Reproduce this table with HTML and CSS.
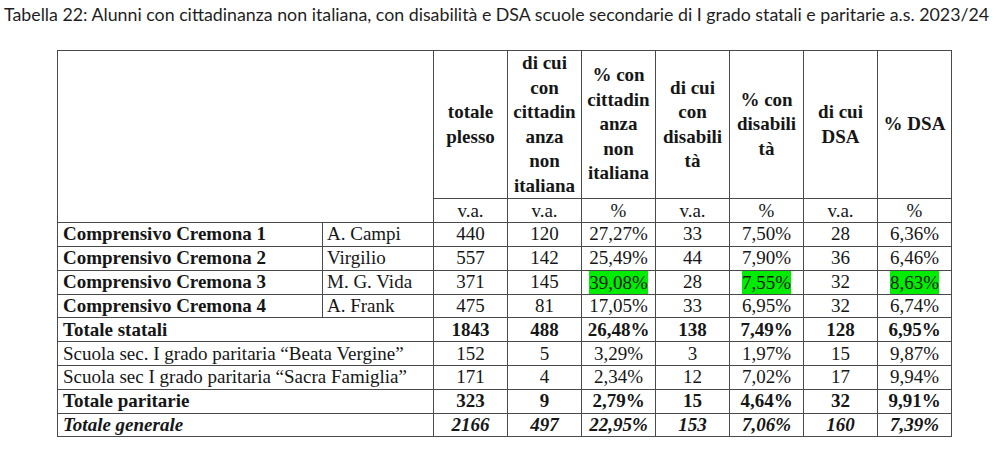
FILE: index.html
```html
<!DOCTYPE html>
<html lang="it">
<head>
<meta charset="utf-8">
<title>Tabella 22</title>
<link rel="stylesheet" href="styles.css">
</head>
<body>
<div class="title">Tabella 22: Alunni con cittadinanza non italiana, con disabilità e DSA scuole secondarie di I grado statali e paritarie a.s. 2023/24</div>
<table class="tab">
  <colgroup>
    <col class="c-name"><col class="c-plesso">
    <col class="c-n"><col class="c-n"><col class="c-n"><col class="c-n"><col class="c-n"><col class="c-n"><col class="c-n">
  </colgroup>
  <tr class="head">
    <th colspan="2" rowspan="2"></th>
    <th>totale<br>plesso</th>
    <th>di cui<br>con<br>cittadin<br>anza<br>non<br>italiana</th>
    <th>% con<br>cittadin<br>anza<br>non<br>italiana</th>
    <th>di cui<br>con<br>disabili<br>tà</th>
    <th>% con<br>disabili<br>tà</th>
    <th>di cui<br>DSA</th>
    <th>% DSA</th>
  </tr>
  <tr class="unit">
    <td>v.a.</td><td>v.a.</td><td>%</td><td>v.a.</td><td>%</td><td>v.a.</td><td>%</td>
  </tr>
  <tr class="r">
    <td class="nm b">Comprensivo Cremona 1</td><td class="pl">A. Campi</td>
    <td>440</td><td>120</td><td>27,27%</td><td>33</td><td>7,50%</td><td>28</td><td>6,36%</td>
  </tr>
  <tr class="r">
    <td class="nm b">Comprensivo Cremona 2</td><td class="pl">Virgilio</td>
    <td>557</td><td>142</td><td>25,49%</td><td>44</td><td>7,90%</td><td>36</td><td>6,46%</td>
  </tr>
  <tr class="r">
    <td class="nm b">Comprensivo Cremona 3</td><td class="pl">M. G. Vida</td>
    <td>371</td><td>145</td><td><span class="hl">39,08%</span></td><td>28</td><td><span class="hl">7,55%</span></td><td>32</td><td><span class="hl">8,63%</span></td>
  </tr>
  <tr class="r">
    <td class="nm b">Comprensivo Cremona 4</td><td class="pl">A. Frank</td>
    <td>475</td><td>81</td><td>17,05%</td><td>33</td><td>6,95%</td><td>32</td><td>6,74%</td>
  </tr>
  <tr class="r b">
    <td class="nm" colspan="2">Totale statali</td>
    <td>1843</td><td>488</td><td>26,48%</td><td>138</td><td>7,49%</td><td>128</td><td>6,95%</td>
  </tr>
  <tr class="r">
    <td class="nm" colspan="2">Scuola sec. I grado paritaria “Beata Vergine”</td>
    <td>152</td><td>5</td><td>3,29%</td><td>3</td><td>1,97%</td><td>15</td><td>9,87%</td>
  </tr>
  <tr class="r">
    <td class="nm" colspan="2">Scuola sec I grado paritaria “Sacra Famiglia”</td>
    <td>171</td><td>4</td><td>2,34%</td><td>12</td><td>7,02%</td><td>17</td><td>9,94%</td>
  </tr>
  <tr class="r b">
    <td class="nm" colspan="2">Totale paritarie</td>
    <td>323</td><td>9</td><td>2,79%</td><td>15</td><td>4,64%</td><td>32</td><td>9,91%</td>
  </tr>
  <tr class="r b i">
    <td class="nm" colspan="2">Totale generale</td>
    <td>2166</td><td>497</td><td>22,95%</td><td>153</td><td>7,06%</td><td>160</td><td>7,39%</td>
  </tr>
</table>
</body>
</html>
```
FILE: styles.css
```css
html, body {
  margin: 0;
  padding: 0;
  background: #ffffff;
}
.title {
  font-family: "Lato", "Liberation Sans", sans-serif;
  font-size: 17.8px;
  color: #1e1e1e;
  padding: 3px 0 0 4px;
  height: 50px;
  box-sizing: border-box;
  white-space: nowrap;
}
.tab {
  margin-left: 57px;
  border-collapse: collapse;
  table-layout: fixed;
  width: 895px;
  font-family: "Liberation Serif", "Times New Roman", serif;
  font-size: 19px;
  color: #161616;
}
.c-name { width: 265px; }
.c-plesso { width: 111px; }
.c-n { width: 74px; }
.tab th, .tab td {
  border: 1px solid #4a4a4a;
  padding: 0;
  text-align: center;
  vertical-align: middle;
  white-space: nowrap;
}
.head th {
  height: 147px;
  line-height: 24.5px;
  font-weight: bold;
}
.unit td {
  height: 23px;
  line-height: 20px;
}
.r td {
  height: 22.8px;
  line-height: 20px;
}
.tab td.nm {
  text-align: left;
  padding-left: 5px;
}
.tab td.pl {
  text-align: left;
  padding-left: 4px;
}
.b td, td.b { font-weight: bold; }
.i td { font-style: italic; }
.hl {
  background: #00ec00;
  display: inline-block;
  line-height: 23px;
}
```
